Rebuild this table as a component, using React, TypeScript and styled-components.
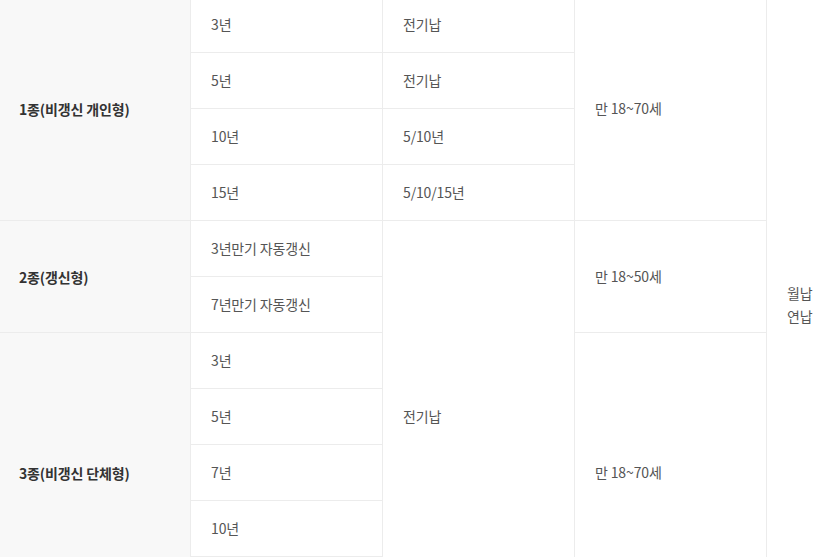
import React from "react";
import styled, { createGlobalStyle } from "styled-components";

const GlobalStyle = createGlobalStyle`
  html, body {
    margin: 0;
    padding: 0;
    overflow: hidden;
    background: #ffffff;
  }
  body {
    font-family: "Noto Sans CJK KR", "Noto Sans", sans-serif;
  }
`;

const Wrap = styled.div`
  width: 836px;
  height: 557px;
  overflow: hidden;
`;

const Table = styled.table`
  width: 960px;
  margin: -4px 0 0 -2px;
  border-collapse: collapse;
  table-layout: fixed;
  font-size: 14px;
  letter-spacing: -0.01em;
`;

const Cell = styled.td`
  height: 55px;
  padding: 0 20px;
  border: 1px solid #ececec;
  color: #555555;
  text-align: left;
  vertical-align: middle;
  line-height: 1.6;
`;

const HeadCell = styled.th`
  padding: 0 20px;
  border: 1px solid #ececec;
  background: #f8f8f8;
  color: #333333;
  font-weight: 700;
  text-align: left;
  vertical-align: middle;
`;

interface Group {
  name: string;
  terms: string[];
}

const groups: Group[] = [
  { name: "1종(비갱신 개인형)", terms: ["3년", "5년", "10년", "15년"] },
  { name: "2종(갱신형)", terms: ["3년만기 자동갱신", "7년만기 자동갱신"] },
  { name: "3종(비갱신 단체형)", terms: ["3년", "5년", "7년", "10년", "15년"] },
];

const payTerms = ["전기납", "전기납", "5/10년", "5/10/15년"];

const totalRows = groups.reduce((n, g) => n + g.terms.length, 0);

export default function App() {
  return (
    <Wrap>
      <GlobalStyle />
      <Table>
        <colgroup>
          <col style={{ width: 192 }} />
          <col style={{ width: 192 }} />
          <col style={{ width: 192 }} />
          <col style={{ width: 192 }} />
          <col style={{ width: 192 }} />
        </colgroup>
        <tbody>
          {groups[0].terms.map((t, i) => (
            <tr key={`a${i}`}>
              {i === 0 && <HeadCell rowSpan={4}>{groups[0].name}</HeadCell>}
              <Cell>{t}</Cell>
              <Cell>{payTerms[i]}</Cell>
              {i === 0 && <Cell rowSpan={4}>만 18~70세</Cell>}
              {i === 0 && (
                <Cell rowSpan={totalRows}>
                  월납
                  <br />
                  연납
                </Cell>
              )}
            </tr>
          ))}
          {groups[1].terms.map((t, i) => (
            <tr key={`b${i}`}>
              {i === 0 && <HeadCell rowSpan={2}>{groups[1].name}</HeadCell>}
              <Cell>{t}</Cell>
              {i === 0 && <Cell rowSpan={7}>전기납</Cell>}
              {i === 0 && <Cell rowSpan={2}>만 18~50세</Cell>}
            </tr>
          ))}
          {groups[2].terms.map((t, i) => (
            <tr key={`c${i}`}>
              {i === 0 && <HeadCell rowSpan={5}>{groups[2].name}</HeadCell>}
              <Cell>{t}</Cell>
              {i === 0 && <Cell rowSpan={5}>만 18~70세</Cell>}
            </tr>
          ))}
        </tbody>
      </Table>
    </Wrap>
  );
}
